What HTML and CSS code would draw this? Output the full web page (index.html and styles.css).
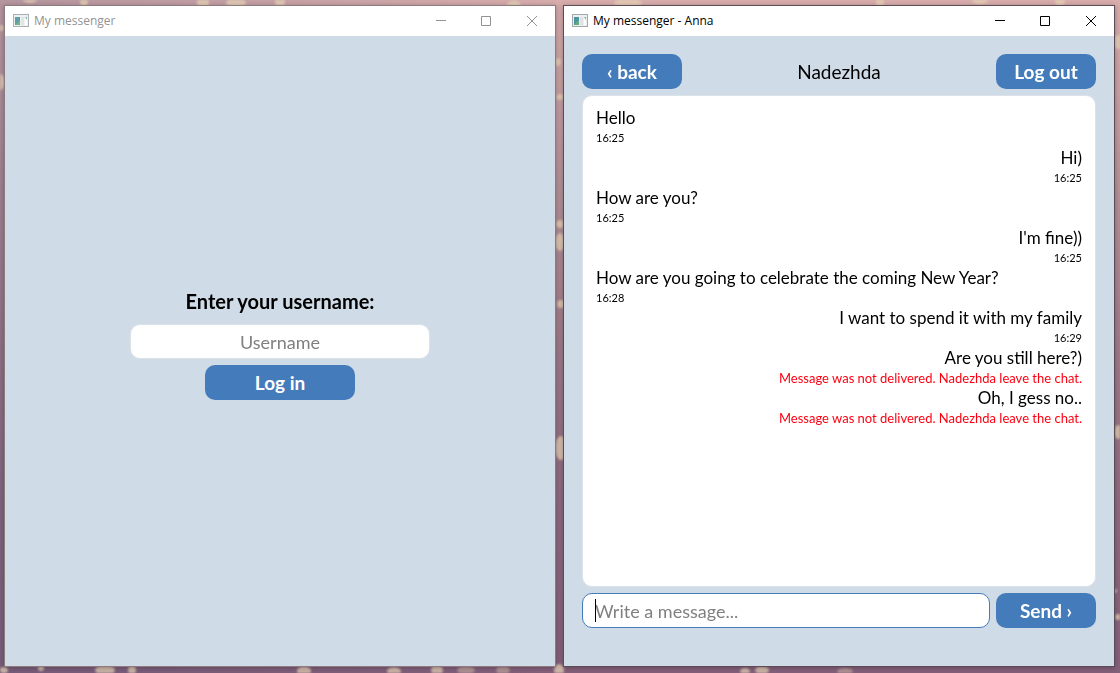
FILE: index.html
```html
<!DOCTYPE html>
<html lang="en">
<head>
<meta charset="utf-8">
<title>My messenger</title>
<link rel="stylesheet" href="styles.css">
</head>
<body>
<svg class="wallpaper" aria-hidden="true" viewBox="0 0 1120 673" preserveAspectRatio="none">
  <g fill="#e8d6b8" opacity=".75">
    <ellipse cx="84" cy="2" rx="4" ry="5"/><ellipse cx="203" cy="3" rx="6" ry="8"/><ellipse cx="236" cy="3" rx="10" ry="5"/><ellipse cx="30" cy="0" rx="7" ry="3"/>
    <ellipse cx="0" cy="82" rx="5" ry="8"/><circle cx="1" cy="28" r="3"/><ellipse cx="280" cy="2" rx="5" ry="6"/><ellipse cx="514" cy="4" rx="7" ry="3"/>
    <ellipse cx="628" cy="3" rx="14" ry="4"/><ellipse cx="880" cy="2" rx="4" ry="6"/><ellipse cx="980" cy="1" rx="8" ry="3"/><ellipse cx="1060" cy="2" rx="5" ry="4"/>
    <ellipse cx="1118" cy="42" rx="5" ry="7"/><circle cx="557" cy="62" r="4"/><ellipse cx="560" cy="97" rx="4" ry="3"/>
    <circle cx="560" cy="224" r="4"/><ellipse cx="560" cy="242" rx="5" ry="9"/><circle cx="561" cy="304" r="4"/><ellipse cx="561" cy="448" rx="6" ry="12"/>
    <ellipse cx="1118" cy="432" rx="4" ry="7"/><circle cx="1118" cy="617" r="3"/><circle cx="1115" cy="591" r="2"/><ellipse cx="4" cy="670" rx="4" ry="3"/><circle cx="41" cy="668" r="3"/>
    <ellipse cx="105" cy="670" rx="10" ry="5"/><ellipse cx="132" cy="670" rx="4" ry="5"/><ellipse cx="304" cy="671" rx="7" ry="5"/><ellipse cx="394" cy="671" rx="7" ry="4"/>
    <ellipse cx="437" cy="670" rx="6" ry="5"/><ellipse cx="466" cy="670" rx="9" ry="4" opacity=".6"/><ellipse cx="503" cy="670" rx="7" ry="4" opacity=".6"/><ellipse cx="559" cy="670" rx="5" ry="6"/>
    <ellipse cx="745" cy="671" rx="5" ry="3"/><ellipse cx="762" cy="670" rx="7" ry="4"/><ellipse cx="845" cy="671" rx="8" ry="3" opacity=".6"/>
  </g>
</svg>
<main class="desktop">
  <section class="window inactive" aria-label="My messenger">
    <header class="titlebar">
      <svg class="app-icon" viewBox="0 0 16 14" aria-hidden="true"><rect x=".5" y=".5" width="15" height="12" fill="#eceef0" stroke="#a3a8ad"/><rect x="2" y="3" width="5" height="8" fill="#4d93a0"/><path d="M2 11l5-5v5z" fill="#61ae7c"/><rect x="8" y="3" width="3" height="8" fill="#dfe2e5"/><rect x="12" y="3" width="2" height="8" fill="#fff"/><path d="M12 3h2v3z" fill="#75b79e"/></svg>
      <span class="caption">My messenger</span>
      <div class="controls">
        <button type="button" aria-label="Minimize"><svg viewBox="0 0 11 11"><path d="M1 4.500h10"/></svg></button>
        <button type="button" aria-label="Maximize"><svg viewBox="0 0 11 11"><path d="M.5.5h9v9h-9z"/></svg></button>
        <button type="button" aria-label="Close"><svg viewBox="0 0 11 11"><path d="M0 0l10 10M10 0L0 10"/></svg></button>
      </div>
    </header>
    <form class="login">
      <label class="prompt" for="username">Enter your username:</label>
      <input class="field username" id="username" type="text" placeholder="Username">
      <button class="action wide" type="button">Log in</button>
    </form>
  </section>

  <section class="window" aria-label="My messenger - Anna">
    <header class="titlebar">
      <svg class="app-icon" viewBox="0 0 16 14" aria-hidden="true"><rect x=".5" y=".5" width="15" height="12" fill="#eceef0" stroke="#a3a8ad"/><rect x="2" y="3" width="5" height="8" fill="#4d93a0"/><path d="M2 11l5-5v5z" fill="#61ae7c"/><rect x="8" y="3" width="3" height="8" fill="#dfe2e5"/><rect x="12" y="3" width="2" height="8" fill="#fff"/><path d="M12 3h2v3z" fill="#75b79e"/></svg>
      <span class="caption">My messenger - Anna</span>
      <div class="controls">
        <button type="button" aria-label="Minimize"><svg viewBox="0 0 11 11"><path d="M1 4.500h10"/></svg></button>
        <button type="button" aria-label="Maximize"><svg viewBox="0 0 11 11"><path d="M.5.5h9v9h-9z"/></svg></button>
        <button type="button" aria-label="Close"><svg viewBox="0 0 11 11"><path d="M0 0l10 10M10 0L0 10"/></svg></button>
      </div>
    </header>
    <div class="chat">
      <div class="chat-head">
        <button class="action" type="button">‹ back</button>
        <h1 class="peer">Nadezhda</h1>
        <button class="action" type="button">Log out</button>
      </div>
      <ol class="messages">
        <li><p>Hello</p><time>16:25</time></li>
        <li class="mine"><p>Hi)</p><time>16:25</time></li>
        <li><p>How are you?</p><time>16:25</time></li>
        <li class="mine"><p>I'm fine))</p><time>16:25</time></li>
        <li><p>How are you going to celebrate the coming New Year?</p><time>16:28</time></li>
        <li class="mine"><p>I want to spend it with my family</p><time>16:29</time></li>
        <li class="mine"><p>Are you still here?)</p><small>Message was not delivered. Nadezhda leave the chat.</small></li>
        <li class="mine"><p>Oh, I gess no..</p><small>Message was not delivered. Nadezhda leave the chat.</small></li>
      </ol>
      <form class="composer">
        <div class="entry">
          <input class="field active" type="text" aria-label="Message" placeholder="Write a message...">
          <span class="caret"></span>
        </div>
        <button class="action" type="button">Send ›</button>
      </form>
    </div>
  </section>
</main>
</body>
</html>
```
FILE: styles.css
```css
* { box-sizing: border-box; }

body {
  margin: 0;
  font-family: Lato, "Open Sans", sans-serif;
  color: #000;
  background:
    linear-gradient(90deg, rgba(80, 80, 120, .25) 0%, rgba(80, 80, 120, 0) 50%),
    linear-gradient(180deg, #d8adac 0%, #b8949a 25%, #a07c89 50%, #8d6a80 75%, #84607a 100%);
}

.wallpaper {
  position: fixed;
  inset: 0;
  width: 100%;
  height: 100%;
  z-index: -1;
  filter: blur(1px);
}

.desktop {
  display: flex;
  gap: 7px;
  min-height: 100vh;
  padding: 5px 5px 6px 4px;
}

.window {
  flex: 1;
  min-width: 0;
  display: flex;
  flex-direction: column;
  border: 1px solid #5c4c55;
  background: #cfdbe6;
  box-shadow: 0 1px 5px rgba(40, 20, 35, .35);
}

.inactive { border-color: #8d7b80; }

.titlebar {
  display: flex;
  align-items: center;
  height: 30px;
  padding-left: 8px;
  background: #fff;
  font: 12px/16px "Open Sans", "Noto Sans", sans-serif;
}

.inactive .titlebar { color: #939393; }

.app-icon { width: 16px; height: 14px; margin-right: 5px; }
.inactive .app-icon { opacity: .9; }

.caption { flex: 1; }

.controls { display: flex; }

.controls button {
  display: grid;
  place-items: center;
  width: 46px;
  height: 30px;
  padding: 0;
  border: 0;
  background: none;
  color: inherit;
}

.controls svg {
  width: 11px;
  height: 11px;
  fill: none;
  stroke: currentColor;
}

.login {
  flex: 1;
  display: flex;
  flex-direction: column;
  align-items: center;
  justify-content: center;
  gap: 6px;
  padding-bottom: 13px;
}

.prompt {
  margin-bottom: 5px;
  font-size: 20px;
  line-height: 24px;
  font-weight: 700;
}

.field {
  width: 100%;
  height: 35px;
  padding: 0 12px;
  border: 1px solid #dbe2e9;
  border-radius: 10px;
  outline: 0;
  background: #fff;
  font: 18px/24px Lato, sans-serif;
}

.field::placeholder { color: #808080; opacity: 1; }
.username { width: 300px; text-align: center; }
.active { border-color: #447bbb; }

.action {
  flex: none;
  width: 100px;
  height: 35px;
  padding: 0;
  border: 0;
  border-radius: 10px;
  background: #447bbb;
  color: #fff;
  font: 700 19px/24px Lato, sans-serif;
}

.wide { width: 150px; }

.chat {
  flex: 1;
  display: flex;
  flex-direction: column;
  gap: 6px;
  padding: 18px 18px 38px;
}

.chat-head {
  display: flex;
  align-items: center;
  justify-content: space-between;
}

.peer { margin: 0; font-size: 19px; line-height: 24px; font-weight: 400; }

.messages {
  flex: 1;
  margin: 0;
  padding: 12px 13px;
  border: 1px solid #dbe2e9;
  border-radius: 10px;
  background: #fff;
  list-style: none;
}

.messages p { margin: 0; font-size: 17px; line-height: 20px; }
.messages time { display: block; font-size: 11px; line-height: 20px; }
.messages small { display: block; font-size: 13px; line-height: 20px; color: #ff0010; }
.mine { text-align: right; }

.composer { display: flex; gap: 6px; }
.entry { position: relative; flex: 1; }
.entry .field { display: block; }

.caret {
  position: absolute;
  left: 13px;
  top: 6px;
  width: 1px;
  height: 23px;
  background: #000;
}
```
